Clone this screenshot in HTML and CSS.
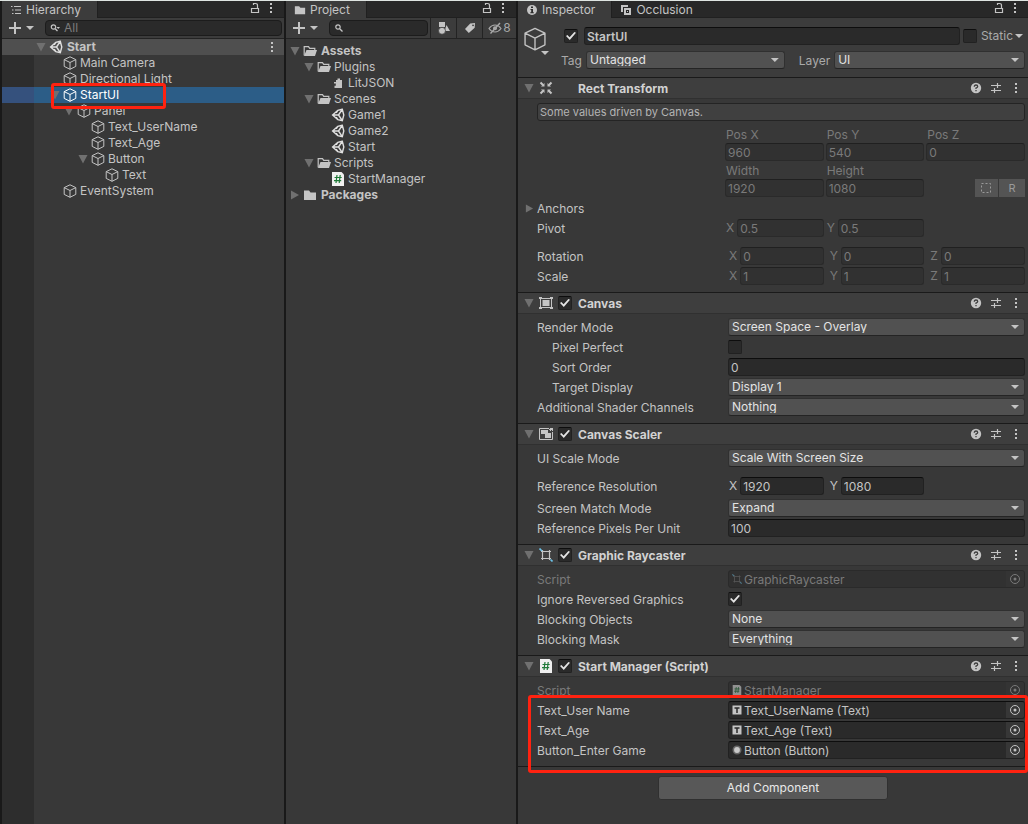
FILE: index.html
```html
<!DOCTYPE html>
<html lang="en">
<head>
    <meta charset="UTF-8">
    <meta name="viewport" content="width=device-width, initial-scale=1.0">
    <title>Unity Editor</title>
    <link rel="stylesheet" href="styles.css">
</head>
<body>
    <svg class="sprite" aria-hidden="true">
        <symbol id="cube" viewBox="0 0 14 14"><path d="M7 .8 12.8 3.6v6.8L7 13.3 1.2 10.4V3.6zM1.2 3.6 7 6.5l5.8-2.9M7 6.5v6.8" fill="none" stroke="currentColor" stroke-linejoin="round"/></symbol>
        <symbol id="unity" viewBox="0 0 14 14"><path d="M11.3 1.3 6.8 2.3 1.600 7l5.200 4.700 4.500 1L12.800 7zM1.600 7H7.500M7.500 7l3.800-5.700M7.500 7l3.800 5.700M6.800 2.300 5.200 4.800M6.800 11.700 5.200 9.200" fill="none" stroke="#e0e0e0" stroke-width="1.400"/></symbol>
        <symbol id="down" viewBox="0 0 10 10"><path d="M.5 1h9L5 9.5z" fill="currentColor"/></symbol>
        <symbol id="right" viewBox="0 0 10 10"><path d="M1 .5v9L9 5z" fill="currentColor"/></symbol>
        <symbol id="caret" viewBox="0 0 8 4"><path d="M0 0h8L4 4z" fill="currentColor"/></symbol>
        <symbol id="plus" viewBox="0 0 12 12"><path d="M6 0v12M0 6h12" stroke="currentColor" stroke-width="2"/></symbol>
        <symbol id="dots" viewBox="0 0 4 12"><path d="M1 1h2v2H1zM1 5h2v2H1zM1 9h2v2H1z" fill="currentColor"/></symbol>
        <symbol id="lock" viewBox="0 0 10 12"><path d="M1.5 6.5h7v4h-7zM7.5 6V3.5Q7.5 1.5 5.5 1.5H3.5V3" fill="none" stroke="currentColor" stroke-width="1.2"/></symbol>
        <symbol id="list" viewBox="0 0 12 12"><path d="M1 2.5h1.5M4 2.5h7M2 6h1.5M5 6h6M2 9.5h1.5M5 9.5h6" stroke="currentColor" stroke-width="1.2"/></symbol>
        <symbol id="folder" viewBox="0 0 14 12"><path d="M1 1.5h5l1.5 2H13V11H1z" fill="currentColor"/></symbol>
        <symbol id="folder-open" viewBox="0 0 14 12"><path d="M1.2 10.5V1.6h4.3l1.2 1.8h5.1V5" fill="none" stroke="currentColor" stroke-width="1.2"/><path d="M3.5 5H14l-2 6H1z" fill="currentColor"/></symbol>
        <symbol id="puzzle" viewBox="0 0 14 14"><path d="M5 4h1.500V2.500h2.500V4h2v8H3.500V9.800h1.300V7.600H3V6h2z" fill="currentColor"/></symbol>
        <symbol id="script" viewBox="0 0 14 14"><path d="M1 0h9.5L13 2.5V14H1z" fill="#f0f0f0"/><path d="M6 3 5 11M9.2 3l-1 8M3.5 5.5h7.2M3 8.7h7.2" stroke="#1f7a38" stroke-width="1.2"/></symbol>
        <symbol id="search" viewBox="0 0 12 12"><circle cx="4" cy="5" r="2.2" fill="none" stroke="currentColor" stroke-width="1.2"/><path d="m5.7 6.7 2.8 2.8" stroke="currentColor" stroke-width="1.3"/></symbol>
        <symbol id="search-down" viewBox="0 0 12 12"><circle cx="3.500" cy="5" r="2.200" fill="none" stroke="currentColor" stroke-width="1.200"/><path d="m5.200 6.700 2.300 2.300" stroke="currentColor" stroke-width="1.300"/><path d="M6.500 5h3.500L8.200 7z" fill="currentColor"/></symbol>
        <symbol id="shapes" viewBox="0 0 14 14"><path d="M2 1h6v5H2zM9.5 4 13 10H7.5z" fill="currentColor"/><circle cx="5" cy="9.8" r="3.5" fill="currentColor" stroke="#3c3c3c" stroke-width=".8"/></symbol>
        <symbol id="tag" viewBox="0 0 14 14"><path fill-rule="evenodd" d="M7.2 2.5 12 2l-.3 4.8L5.8 12 2 8zM10 3.4a.9.9 0 1 0 .1 1.8.9.9 0 0 0-.1-1.8z" fill="currentColor"/></symbol>
        <symbol id="hidden" viewBox="0 0 14 12"><path d="M1 6.5Q3.5 3 7 3t6 3.5Q10.5 10 7 10T1 6.5z" fill="none" stroke="currentColor" stroke-width="1.2"/><circle cx="7" cy="6.3" r="2" fill="currentColor"/><path d="M2.5 11.5 12 1" stroke="currentColor" stroke-width="1.4"/></symbol>
        <symbol id="info" viewBox="0 0 12 12"><circle cx="6" cy="6" r="5" fill="currentColor"/><path d="M5 2.4h2V4H5zM4.5 5H7v3.2h.8v1H4.3v-1h.9V6h-.7z" fill="#2b2b2b"/></symbol>
        <symbol id="occlusion" viewBox="0 0 12 12"><path d="M1 1h7v2H3v5H1z" fill="currentColor"/><path fill-rule="evenodd" d="M4 4h7v7H4zM6 6v3h3V6z" fill="currentColor"/><path d="M7 7h1v1H7z" fill="currentColor"/></symbol>
        <symbol id="help" viewBox="0 0 12 12"><circle cx="6" cy="6" r="5.2" fill="currentColor"/><path d="M4.300 4.700Q4.300 3 6 3t1.700 1.400Q7.700 5.300 6 6v1M6 8v1.300" fill="none" stroke="#3e3e3e" stroke-width="1.300"/></symbol>
        <symbol id="presets" viewBox="0 0 12 12"><path d="M1 3.500h6M8 3.500h3M7.500 1v5M1 8.500h3M5 8.500h6M4.500 6v5" stroke="currentColor" stroke-width="1.200"/></symbol>
        <symbol id="rect-transform" viewBox="0 0 14 14"><path d="M1.500 1.500 4 4M12.500 1.500 10 4M1.500 12.500 4 10M12.500 12.500 10 10" stroke="currentColor" stroke-width="2"/><path d="M5.500 2v3.500H2zM8.500 2v3.500H12zM5.500 12V8.500H2zM8.500 12V8.500H12z" fill="currentColor"/></symbol>
        <symbol id="canvas" viewBox="0 0 14 14"><path d="M1.500 2v10M12.500 2v10M1 2.500h12M1 11.500h12" stroke="currentColor"/><path d="M0 1h3v2H0zM11 1h3v2h-3zM0 11h3v2H0zM11 11h3v2h-3zM3.500 4h7v6h-7z" fill="currentColor"/></symbol>
        <symbol id="scaler" viewBox="0 0 14 14"><path d="M10 1.500H.5v11h13V5" fill="none" stroke="currentColor"/><path d="M2 3h7v3h3v5H6V7H2zM11 1h3v3h-1V3h-1v1h-1V3h-1V2h1z" fill="currentColor"/></symbol>
        <symbol id="raycaster" viewBox="0 0 14 14"><path d="M3.500 2v10M10.500 2v10M2 3.500h10M2 10.500h10" stroke="currentColor" stroke-width="1.200" fill="none"/><path d="M.5.500 3 3M11.500 11.500l2 2" stroke="#6cc3ea" stroke-width="1.600"/></symbol>
        <symbol id="text-asset" viewBox="0 0 10 10"><path d="M.5.5h9v9h-9z" fill="#c4c4c4"/><path d="M2.5 3h5M5 3v5" stroke="#2a2a2a" stroke-width="1.5"/></symbol>
        <symbol id="button-asset" viewBox="0 0 10 10"><circle cx="5" cy="5" r="3.7" fill="#c8c8c8" stroke="#666" stroke-width="1.6"/></symbol>
        <symbol id="picker" viewBox="0 0 12 12"><circle cx="6" cy="6" r="4.5" fill="none" stroke="currentColor"/><circle cx="6" cy="6" r="1.5" fill="currentColor"/></symbol>
        <symbol id="blueprint" viewBox="0 0 12 12"><path d="M1.5 1.5h9v9h-9z" fill="none" stroke="currentColor" stroke-dasharray="2 2"/></symbol>
    </svg>

    <div class="editor">
        <section class="panel hierarchy">
            <div class="tabs">
                <button class="tab active"><svg class="icon-sm"><use href="#list"/></svg>Hierarchy</button>
                <div class="tab-tools">
                    <button aria-label="Lock hierarchy"><svg class="lock"><use href="#lock"/></svg></button>
                    <button aria-label="Hierarchy menu"><svg class="dots"><use href="#dots"/></svg></button>
                </div>
            </div>
            <div class="toolbar">
                <button class="create" aria-label="Create"><svg class="icon-sm"><use href="#plus"/></svg><svg class="caret"><use href="#caret"/></svg></button>
                <label class="search"><svg class="icon-sm"><use href="#search-down"/></svg><input type="text" placeholder="All" aria-label="Search hierarchy"></label>
            </div>
            <div class="tree">
                <div class="row scene"><svg class="twisty"><use href="#down"/></svg><svg class="icon"><use href="#unity"/></svg><span>Start</span><button aria-label="Scene menu"><svg class="dots"><use href="#dots"/></svg></button></div>
                <div class="row depth-1"><i class="twisty"></i><svg class="icon"><use href="#cube"/></svg><span>Main Camera</span></div>
                <div class="row depth-1"><i class="twisty"></i><svg class="icon"><use href="#cube"/></svg><span>Directional Light</span></div>
                <div class="row depth-1 selected"><svg class="twisty"><use href="#down"/></svg><svg class="icon"><use href="#cube"/></svg><span>StartUI</span><div class="marker"></div></div>
                <div class="row depth-2"><svg class="twisty"><use href="#down"/></svg><svg class="icon"><use href="#cube"/></svg><span>Panel</span></div>
                <div class="row depth-3"><i class="twisty"></i><svg class="icon"><use href="#cube"/></svg><span>Text_UserName</span></div>
                <div class="row depth-3"><i class="twisty"></i><svg class="icon"><use href="#cube"/></svg><span>Text_Age</span></div>
                <div class="row depth-3"><svg class="twisty"><use href="#down"/></svg><svg class="icon"><use href="#cube"/></svg><span>Button</span></div>
                <div class="row depth-4"><i class="twisty"></i><svg class="icon"><use href="#cube"/></svg><span>Text</span></div>
                <div class="row depth-1"><i class="twisty"></i><svg class="icon"><use href="#cube"/></svg><span>EventSystem</span></div>
            </div>
        </section>

        <section class="panel project">
            <div class="tabs">
                <button class="tab active"><svg class="icon-sm"><use href="#folder"/></svg>Project</button>
                <div class="tab-tools">
                    <button aria-label="Lock project"><svg class="lock"><use href="#lock"/></svg></button>
                    <button aria-label="Project menu"><svg class="dots"><use href="#dots"/></svg></button>
                </div>
            </div>
            <div class="toolbar">
                <button class="create" aria-label="Create asset"><svg class="icon-sm"><use href="#plus"/></svg><svg class="caret"><use href="#caret"/></svg></button>
                <label class="search"><svg class="icon-sm"><use href="#search"/></svg><input type="text" aria-label="Search project"></label>
                <button class="filter" aria-label="Search by type"><svg class="icon"><use href="#shapes"/></svg></button>
                <button class="filter" aria-label="Search by label"><svg class="icon"><use href="#tag"/></svg></button>
                <button class="filter hidden-count"><svg class="icon"><use href="#hidden"/></svg>8</button>
            </div>
            <div class="tree">
                <div class="row bold"><svg class="twisty"><use href="#down"/></svg><svg class="icon"><use href="#folder-open"/></svg><span>Assets</span></div>
                <div class="row depth-1"><svg class="twisty"><use href="#down"/></svg><svg class="icon"><use href="#folder-open"/></svg><span>Plugins</span></div>
                <div class="row depth-2"><i class="twisty"></i><svg class="icon"><use href="#puzzle"/></svg><span>LitJSON</span></div>
                <div class="row depth-1"><svg class="twisty"><use href="#down"/></svg><svg class="icon"><use href="#folder-open"/></svg><span>Scenes</span></div>
                <div class="row depth-2"><i class="twisty"></i><svg class="icon"><use href="#unity"/></svg><span>Game1</span></div>
                <div class="row depth-2"><i class="twisty"></i><svg class="icon"><use href="#unity"/></svg><span>Game2</span></div>
                <div class="row depth-2"><i class="twisty"></i><svg class="icon"><use href="#unity"/></svg><span>Start</span></div>
                <div class="row depth-1"><svg class="twisty"><use href="#down"/></svg><svg class="icon"><use href="#folder-open"/></svg><span>Scripts</span></div>
                <div class="row depth-2"><i class="twisty"></i><svg class="icon"><use href="#script"/></svg><span>StartManager</span></div>
                <div class="row bold"><svg class="twisty"><use href="#right"/></svg><svg class="icon"><use href="#folder"/></svg><span>Packages</span></div>
            </div>
        </section>

        <section class="panel inspector">
            <div class="tabs">
                <button class="tab active"><svg class="icon-sm"><use href="#info"/></svg>Inspector</button>
                <button class="tab"><svg class="icon-sm"><use href="#occlusion"/></svg>Occlusion</button>
                <div class="tab-tools">
                    <button aria-label="Lock inspector"><svg class="lock"><use href="#lock"/></svg></button>
                    <button aria-label="Inspector menu"><svg class="dots"><use href="#dots"/></svg></button>
                </div>
            </div>

            <div class="object-header">
                <button class="object-icon" aria-label="Object icon"><svg class="icon-lg"><use href="#cube"/></svg><svg class="caret"><use href="#caret"/></svg></button>
                <div class="object-lines">
                    <div class="object-line">
                        <input type="checkbox" aria-label="Active" checked>
                        <input type="text" class="object-name" aria-label="Name" value="StartUI">
                        <label class="static"><input type="checkbox">Static</label>
                        <svg class="caret"><use href="#caret"/></svg>
                    </div>
                    <div class="object-line tag-line">
                        <label for="tag-field">Tag</label>
                        <span class="select tag-select"><select id="tag-field"><option>Untagged</option></select></span>
                        <label for="layer-field" class="layer-label">Layer</label>
                        <span class="select layer-select"><select id="layer-field"><option>UI</option></select></span>
                    </div>
                </div>
            </div>

            <div class="component">
                <div class="component-header">
                    <svg class="twisty"><use href="#down"/></svg><svg class="icon"><use href="#rect-transform"/></svg><i class="no-check"></i>
                    <h2>Rect Transform</h2>
                    <button aria-label="Help"><svg class="icon-sm"><use href="#help"/></svg></button>
                    <button aria-label="Presets"><svg class="icon-sm"><use href="#presets"/></svg></button>
                    <button aria-label="Menu"><svg class="dots"><use href="#dots"/></svg></button>
                </div>
                <div class="component-body rect">
                    <p class="help-box">Some values driven by Canvas.</p>
                    <div class="rect-values disabled">
                        <label for="pos-x">Pos X</label><label for="pos-y">Pos Y</label><label for="pos-z">Pos Z</label>
                        <input type="text" id="pos-x" value="960" disabled><input type="text" id="pos-y" value="540" disabled><input type="text" id="pos-z" value="0" disabled>
                        <label for="rect-w">Width</label><label for="rect-h">Height</label><span></span>
                        <input type="text" id="rect-w" value="1920" disabled><input type="text" id="rect-h" value="1080" disabled>
                        <div class="modes"><button disabled aria-label="Blueprint mode"><svg class="icon-sm"><use href="#blueprint"/></svg></button><button disabled>R</button></div>
                    </div>
                    <div class="field anchors"><span><svg class="fold"><use href="#right"/></svg>Anchors</span></div>
                    <div class="field vector-field pivot"><span>Pivot</span>
                        <div class="vector disabled"><label>X<input type="text" value="0.5" disabled></label><label>Y<input type="text" value="0.5" disabled></label></div>
                    </div>
                    <div class="field vector-field spaced"><span>Rotation</span>
                        <div class="vector disabled"><label>X<input type="text" value="0" disabled></label><label>Y<input type="text" value="0" disabled></label><label>Z<input type="text" value="0" disabled></label></div>
                    </div>
                    <div class="field vector-field"><span>Scale</span>
                        <div class="vector disabled"><label>X<input type="text" value="1" disabled></label><label>Y<input type="text" value="1" disabled></label><label>Z<input type="text" value="1" disabled></label></div>
                    </div>
                </div>
            </div>

            <div class="component">
                <div class="component-header">
                    <svg class="twisty"><use href="#down"/></svg><svg class="icon"><use href="#canvas"/></svg><input type="checkbox" aria-label="Canvas enabled" checked>
                    <h2>Canvas</h2>
                    <button aria-label="Help"><svg class="icon-sm"><use href="#help"/></svg></button>
                    <button aria-label="Presets"><svg class="icon-sm"><use href="#presets"/></svg></button>
                    <button aria-label="Menu"><svg class="dots"><use href="#dots"/></svg></button>
                </div>
                <div class="component-body">
                    <div class="field"><label for="render-mode">Render Mode</label><span class="select"><select id="render-mode"><option>Screen Space - Overlay</option></select></span></div>
                    <div class="field indent"><label for="pixel-perfect">Pixel Perfect</label><input type="checkbox" id="pixel-perfect"></div>
                    <div class="field indent"><label for="sort-order">Sort Order</label><input type="text" id="sort-order" value="0"></div>
                    <div class="field indent"><label for="target-display">Target Display</label><span class="select"><select id="target-display"><option>Display 1</option></select></span></div>
                    <div class="field"><label for="channels">Additional Shader Channels</label><span class="select"><select id="channels"><option>Nothing</option></select></span></div>
                </div>
            </div>

            <div class="component">
                <div class="component-header">
                    <svg class="twisty"><use href="#down"/></svg><svg class="icon"><use href="#scaler"/></svg><input type="checkbox" aria-label="Canvas Scaler enabled" checked>
                    <h2>Canvas Scaler</h2>
                    <button aria-label="Help"><svg class="icon-sm"><use href="#help"/></svg></button>
                    <button aria-label="Presets"><svg class="icon-sm"><use href="#presets"/></svg></button>
                    <button aria-label="Menu"><svg class="dots"><use href="#dots"/></svg></button>
                </div>
                <div class="component-body">
                    <div class="field"><label for="scale-mode">UI Scale Mode</label><span class="select"><select id="scale-mode"><option>Scale With Screen Size</option></select></span></div>
                    <div class="field vector-field spaced"><span>Reference Resolution</span>
                        <div class="vector"><label>X<input type="text" value="1920"></label><label>Y<input type="text" value="1080"></label></div>
                    </div>
                    <div class="field match-mode"><label for="match-mode">Screen Match Mode</label><span class="select"><select id="match-mode"><option>Expand</option></select></span></div>
                    <div class="field"><label for="ppu">Reference Pixels Per Unit</label><input type="text" id="ppu" value="100"></div>
                </div>
            </div>

            <div class="component">
                <div class="component-header">
                    <svg class="twisty"><use href="#down"/></svg><svg class="icon"><use href="#raycaster"/></svg><input type="checkbox" aria-label="Graphic Raycaster enabled" checked>
                    <h2>Graphic Raycaster</h2>
                    <button aria-label="Help"><svg class="icon-sm"><use href="#help"/></svg></button>
                    <button aria-label="Presets"><svg class="icon-sm"><use href="#presets"/></svg></button>
                    <button aria-label="Menu"><svg class="dots"><use href="#dots"/></svg></button>
                </div>
                <div class="component-body">
                    <div class="field disabled"><label for="ray-script">Script</label><div class="object-field"><svg class="icon-xs"><use href="#raycaster"/></svg><input type="text" id="ray-script" value="GraphicRaycaster" disabled><button disabled aria-label="Pick script"><svg class="icon-sm"><use href="#picker"/></svg></button></div></div>
                    <div class="field"><label for="ignore-reversed">Ignore Reversed Graphics</label><input type="checkbox" id="ignore-reversed" checked></div>
                    <div class="field"><label for="blocking-objects">Blocking Objects</label><span class="select"><select id="blocking-objects"><option>None</option></select></span></div>
                    <div class="field"><label for="blocking-mask">Blocking Mask</label><span class="select"><select id="blocking-mask"><option>Everything</option></select></span></div>
                </div>
            </div>

            <div class="component">
                <div class="component-header">
                    <svg class="twisty"><use href="#down"/></svg><svg class="icon"><use href="#script"/></svg><input type="checkbox" aria-label="Start Manager enabled" checked>
                    <h2>Start Manager (Script)</h2>
                    <button aria-label="Help"><svg class="icon-sm"><use href="#help"/></svg></button>
                    <button aria-label="Presets"><svg class="icon-sm"><use href="#presets"/></svg></button>
                    <button aria-label="Menu"><svg class="dots"><use href="#dots"/></svg></button>
                </div>
                <div class="component-body">
                    <div class="field disabled"><label for="start-script">Script</label><div class="object-field"><svg class="icon-xs"><use href="#script"/></svg><input type="text" id="start-script" value="StartManager" disabled><button disabled aria-label="Pick script"><svg class="icon-sm"><use href="#picker"/></svg></button></div></div>
                    <div class="references">
                        <div class="field"><label for="ref-name">Text_User Name</label><div class="object-field"><svg class="icon-xs"><use href="#text-asset"/></svg><input type="text" id="ref-name" value="Text_UserName (Text)"><button aria-label="Pick user name text"><svg class="icon-sm"><use href="#picker"/></svg></button></div></div>
                        <div class="field"><label for="ref-age">Text_Age</label><div class="object-field"><svg class="icon-xs"><use href="#text-asset"/></svg><input type="text" id="ref-age" value="Text_Age (Text)"><button aria-label="Pick age text"><svg class="icon-sm"><use href="#picker"/></svg></button></div></div>
                        <div class="field"><label for="ref-button">Button_Enter Game</label><div class="object-field"><svg class="icon-xs"><use href="#button-asset"/></svg><input type="text" id="ref-button" value="Button (Button)"><button aria-label="Pick button"><svg class="icon-sm"><use href="#picker"/></svg></button></div></div>
                        <div class="marker"></div>
                    </div>
                </div>
            </div>

            <div class="inspector-footer">
                <button class="add-component">Add Component</button>
            </div>
        </section>
    </div>
</body>
</html>
```
FILE: styles.css
```css
* {
    margin: 0;
    padding: 0;
    box-sizing: border-box;
}

body {
    background-color: #dfe5e2;
    color: #c4c4c4;
    font-family: Inter, "Liberation Sans", sans-serif;
    font-size: 12px;
    line-height: 16px;
    min-height: 100vh;
    padding: 1px 0;
    display: flex;
}

button,
input,
select {
    font: inherit;
    color: inherit;
}

button {
    background: none;
    border: none;
    display: flex;
    align-items: center;
    justify-content: center;
}

svg {
    display: block;
    flex-shrink: 0;
}

.sprite {
    display: none;
}

.icon {
    width: 14px;
    height: 14px;
}

.icon-xs {
    width: 10px;
    height: 10px;
}

.icon-sm {
    width: 12px;
    height: 12px;
}

.icon-lg {
    width: 24px;
    height: 24px;
    stroke-width: 0.8;
}

.caret {
    width: 8px;
    height: 4px;
}

.dots {
    width: 4px;
    height: 12px;
}

.lock {
    width: 10px;
    height: 12px;
}

.editor {
    flex: 1;
    display: grid;
    grid-template-columns: 141fr 115fr 255fr;
    gap: 2px;
    padding-left: 2px;
    background-color: #191919;
}

.panel {
    background-color: #383838;
    min-width: 0;
}

/* Tabs and toolbars */

.tabs {
    display: flex;
    height: 17px;
    background-color: #282828;
    border-bottom: 1px solid #202020;
}

.tab {
    gap: 4px;
    height: 17px;
    padding: 0 16px 0 8px;
}

.tab.active {
    background-color: #3c3c3c;
    border-right: 1px solid #202020;
}

.tab-tools {
    display: flex;
    align-items: center;
    gap: 9px;
    margin-left: auto;
    padding-right: 11px;
    padding-bottom: 2px;
}

.toolbar {
    display: flex;
    align-items: center;
    height: 21px;
    padding-left: 7px;
    background-color: #3c3c3c;
    border-bottom: 1px solid #232323;
}

.create {
    gap: 5px;
    margin-right: 11px;
}

.search {
    flex: 1;
    display: flex;
    align-items: center;
    gap: 2px;
    min-width: 0;
    height: 16px;
    padding-left: 4px;
    margin-right: 2px;
    background-color: #2a2a2a;
    border: 1px solid #1c1c1c;
    border-radius: 4px;
}

.search input {
    width: 100%;
    min-width: 0;
    background: none;
    border: none;
    outline: none;
}

.search input::placeholder {
    color: #7c7c7c;
}

.filter {
    width: 26px;
    height: 20px;
    border-left: 1px solid #232323;
}

.hidden-count {
    width: 34px;
    gap: 1px;
    color: #a8a8a8;
}

/* Trees */

.tree .row {
    display: flex;
    align-items: center;
    height: 16px;
    position: relative;
}

.hierarchy {
    display: flex;
    flex-direction: column;
}

.hierarchy .tree {
    flex: 1;
    background: linear-gradient(to right, #2d2d2d 32px, #383838 32px);
}

.hierarchy .row {
    padding-left: 32px;
}

.project .tree {
    padding-top: 4px;
}

.project .row {
    padding-left: 2px;
}

.twisty {
    width: 14px;
    height: 10px;
    color: #707070;
}

.row .icon {
    margin-left: 1px;
    margin-right: 3px;
}

.hierarchy .depth-1 {
    padding-left: 46px;
}

.hierarchy .depth-2 {
    padding-left: 60px;
}

.hierarchy .depth-3 {
    padding-left: 74px;
}

.hierarchy .depth-4 {
    padding-left: 88px;
}

.project .depth-1 {
    padding-left: 16px;
}

.project .depth-2 {
    padding-left: 30px;
}

.row.scene {
    background-color: #4f4f4f;
    font-weight: 700;
}

.row.scene button {
    margin-left: auto;
    margin-right: 10px;
}

.row.bold {
    font-weight: 700;
}

.row.scene .icon,
.row.bold .icon {
    margin-right: 4px;
}

.row.selected {
    background: linear-gradient(to right, #35517d 32px, #2c5d87 32px);
    color: #fff;
}

/* Red outline round the parts to look at */

.marker {
    position: absolute;
    border: 3px solid #ff2210;
    border-radius: 3px;
    pointer-events: none;
    z-index: 1;
}

.row .marker {
    left: 49px;
    top: -4px;
    width: 115px;
    height: 26px;
}

.references .marker {
    left: -9px;
    right: -3px;
    top: -6px;
    bottom: -14px;
}

/* Form controls */

input[type="text"] {
    width: 100%;
    min-width: 0;
    height: 18px;
    padding: 0 2px;
    background-color: #2a2a2a;
    border: 1px solid #212121;
    border-top-color: #0d0d0d;
    border-radius: 3px;
}

input[type="text"]:disabled {
    color: #7a7a7a;
    background-color: #313131;
    border-color: #2a2a2a;
    border-top-color: #202020;
}

.search input[type="text"],
.object-field input[type="text"] {
    height: 14px;
    background: none;
    border: none;
    padding: 0;
}

.object-field input[type="text"] {
    height: 16px;
    padding-top: 1px;
}

input[type="checkbox"] {
    appearance: none;
    flex-shrink: 0;
    display: grid;
    width: 14px;
    height: 14px;
    background-color: #2a2a2a;
    border: 1px solid #212121;
    border-top-color: #0d0d0d;
    border-radius: 2px;
}

input[type="checkbox"]:checked::before {
    content: "";
    width: 10px;
    height: 8px;
    margin: 2px 1px;
    background-color: #e4e4e4;
    clip-path: polygon(0 50%, 14% 38%, 36% 66%, 84% 0, 100% 10%, 38% 100%);
}

.select {
    flex: 1;
    display: grid;
    align-items: center;
    min-width: 0;
}

.select select {
    grid-area: 1 / 1;
    appearance: none;
    width: 100%;
    height: 18px;
    padding: 0 3px 2px;
    color: #e4e4e4;
    background-color: #515151;
    border: 1px solid #303030;
    border-bottom-color: #242424;
    border-radius: 3px;
}

.select::after {
    content: "";
    grid-area: 1 / 1;
    justify-self: end;
    width: 8px;
    height: 4px;
    margin-right: 6px;
    background-color: #c4c4c4;
    clip-path: polygon(0 0, 100% 0, 50% 100%);
    pointer-events: none;
    z-index: 1;
}

.object-field {
    display: flex;
    align-items: center;
    gap: 2px;
    height: 18px;
    padding-left: 3px;
    background-color: #2a2a2a;
    border: 1px solid #212121;
    border-top-color: #0d0d0d;
    border-radius: 3px;
    overflow: hidden;
}

.object-field button {
    width: 18px;
    height: 16px;
    flex-shrink: 0;
    background-color: #373737;
}

/* Inspector */

.object-header {
    display: flex;
    gap: 10px;
    padding: 9px 3px 8px 5px;
    background-color: #3c3c3c;
}

.object-icon {
    flex-direction: column;
    align-items: flex-end;
    justify-content: flex-start;
    width: 26px;
}

.object-icon .icon-lg {
    align-self: flex-start;
}

.object-lines {
    flex: 1;
    display: flex;
    flex-direction: column;
    gap: 6px;
}

.object-line {
    display: flex;
    align-items: center;
    height: 18px;
    padding-left: 5px;
}

.object-line .object-name {
    flex: 1;
    margin: 0 3px 0 6px;
    font-weight: 600;
}

.static {
    display: flex;
    align-items: center;
    gap: 4px;
    margin-right: 2px;
    color: #aaa;
}

.object-line > .caret {
    margin-right: 2px;
}

.tag-line {
    gap: 4px;
    padding-left: 2px;
}

.tag-line label {
    padding-top: 1px;
    color: #aaa;
}

.tag-select {
    flex-grow: 198;
}

.layer-select {
    flex-grow: 190;
}

.layer-label {
    padding-left: 10px;
}

.component {
    border-top: 1px solid #1a1a1a;
}

.component-header {
    display: flex;
    align-items: center;
    height: 21px;
    padding-left: 4px;
    padding-right: 2px;
    background-color: #3e3e3e;
    border-bottom: 1px solid #303030;
}

.component-header .icon {
    margin: 0 5px 0 3px;
}

.component-header h2 {
    flex: 1;
    margin-left: 6px;
    padding-top: 1px;
    font-size: 12px;
    font-weight: 700;
    color: #d2d2d2;
}

.component-header button {
    width: 20px;
}

.no-check {
    width: 14px;
}

.component-body {
    display: flex;
    flex-direction: column;
    gap: 2px;
    padding: 4px 3px 7px 19px;
}

.field {
    display: grid;
    grid-template-columns: 191px 1fr;
    align-items: center;
    height: 18px;
}

.field > label,
.field > span:first-child {
    padding-top: 1px;
}

.vector-field {
    grid-template-columns: 188px 1fr;
}

.indent > label {
    padding-left: 15px;
}

.spaced {
    margin-top: 8px;
}

.match-mode {
    margin-top: 2px;
}

.disabled {
    color: #7a7a7a;
}

.disabled .icon-xs {
    opacity: 0.5;
}

.disabled .object-field button {
    background-color: #343434;
}

.object-field input:disabled {
    background: none;
}

.disabled .object-field {
    background-color: #313131;
    border-color: #2a2a2a;
}

.vector,
.rect-values {
    display: grid;
    grid-template-columns: repeat(3, 1fr);
    column-gap: 2px;
}

.vector label {
    display: flex;
    align-items: center;
    gap: 3px;
    padding-left: 4px;
}

.pivot .vector label {
    padding-left: 1px;
}

.help-box {
    height: 18px;
    padding-left: 2px;
    font-size: 11px;
    color: #b4b4b4;
    background-color: #404040;
    border: 1px solid #242424;
    border-radius: 3px;
}

.rect-values {
    margin-left: 188px;
    padding-top: 4px;
}

.rect-values label {
    height: 16px;
    padding-left: 1px;
}

.rect-values input + label,
.rect-values input + label ~ label {
    margin-top: 2px;
}

.modes {
    display: flex;
    justify-content: flex-end;
    gap: 1px;
}

.modes button {
    width: 26px;
    height: 18px;
    font-size: 11px;
    color: #9a9a9a;
    background-color: #545454;
}

.modes button:first-child {
    width: 23px;
}

.anchors span {
    display: flex;
    align-items: center;
    margin-left: -12px;
}

.fold {
    width: 9px;
    height: 9px;
    margin-right: 3px;
    color: #707070;
}

.references {
    position: relative;
    display: flex;
    flex-direction: column;
    gap: 2px;
}

.inspector-footer {
    display: flex;
    justify-content: center;
    padding: 9px 0 24px;
    border-top: 1px solid #1a1a1a;
}

.add-component {
    width: 230px;
    height: 24px;
    color: #e8e8e8;
    background-color: #585858;
    border: 1px solid #303030;
    border-radius: 3px;
}
```
